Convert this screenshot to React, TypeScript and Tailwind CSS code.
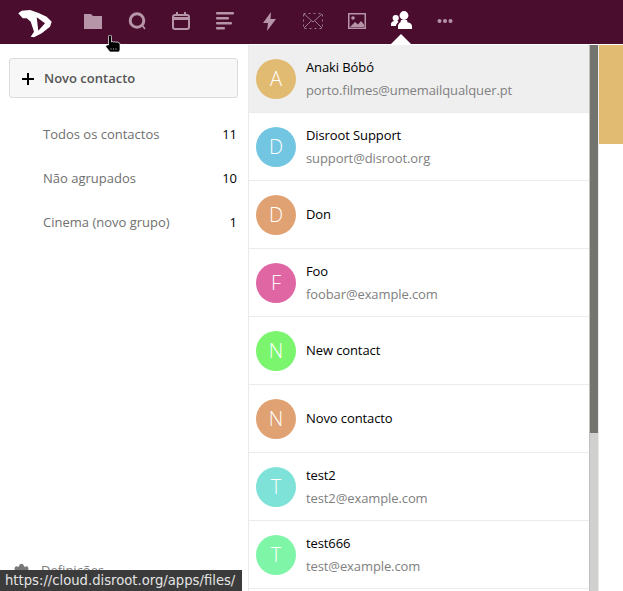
import React from "react";
import { Settings } from "lucide-react";

const contacts = [
  { name: "Anaki Bóbó", email: "porto.filmes@umemailqualquer.pt", letter: "A", color: "bg-[#e2bb73]", active: true },
  { name: "Disroot Support", email: "support@disroot.org", letter: "D", color: "bg-[#73c6e2]" },
  { name: "Don", email: "", letter: "D", color: "bg-[#e0a273]" },
  { name: "Foo", email: "foobar@example.com", letter: "F", color: "bg-[#df66a3]" },
  { name: "New contact", email: "", letter: "N", color: "bg-[#7bf56e]" },
  { name: "Novo contacto", email: "", letter: "N", color: "bg-[#e0a273]" },
  { name: "test2", email: "test2@example.com", letter: "T", color: "bg-[#7fe2d8]" },
  { name: "test666", email: "test@example.com", letter: "T", color: "bg-[#7ff5a8]" },
];

const groups = [
  { label: "Todos os contactos", count: 11 },
  { label: "Não agrupados", count: 10 },
  { label: "Cinema (novo grupo)", count: 1 },
];

const Logo = () => (
  <svg width="34" height="28" viewBox="0 0 34 28" fill="#fff" fillRule="evenodd">
    <path d="M.3 3.300 3.700.7 12 0l8 2.700 8.700 4 5 5-1.700 5-8.300 6.600-7.700 4-3.300-.6 3.300-5-3.300-10-4-3.400h-4zM18.700 7.300l1.600 13.400 6.700-7.400z" />
  </svg>
);

const NavIcon = ({ children }: { children: React.ReactNode }) => (
  <div className="w-[44px] h-11 pb-[2px] flex items-center justify-center">{children}</div>
);

const Header = () => (
  <header className="h-11 shrink-0 bg-[#4a0d2e] flex items-center relative">
    <div className="w-[71px] h-11 pl-[18px] pt-[10px]"><Logo /></div>
    <div className="flex items-center text-[#b795a8]">
      <NavIcon>
        <svg width="18" height="15" viewBox="0 0 18 15" fill="currentColor"><path d="M0 0h7l2 2h9v13H0z" /></svg>
      </NavIcon>
      <NavIcon>
        <svg width="18" height="18" viewBox="0 0 18 18" fill="none" stroke="currentColor" strokeWidth="3"><circle cx="9" cy="8.500" r="6.800" /><path d="M14 13l3 4" strokeWidth="1.500" /></svg>
      </NavIcon>
      <NavIcon>
        <svg width="18" height="18" viewBox="0 0 18 18" fill="none" stroke="currentColor" strokeWidth="2"><rect x="1" y="3" width="16" height="14" rx="2" /><path d="M1 6.500h16" strokeWidth="3" /><path d="M5 0v4M13 0v4" /></svg>
      </NavIcon>
      <NavIcon>
        <svg width="18" height="18" viewBox="0 0 18 18" fill="currentColor"><rect x="0" y="0" width="18" height="2.500" rx="1" /><rect x="0" y="5" width="13" height="2.500" rx="1" /><rect x="0" y="10" width="16" height="2.500" rx="1" /><rect x="0" y="15" width="9" height="2.500" rx="1" /></svg>
      </NavIcon>
      <NavIcon>
        <svg width="13" height="19" viewBox="0 0 13 19" fill="currentColor"><path d="M8 0L0 11h5l-1 8 9-12H7.500z" /></svg>
      </NavIcon>
      <NavIcon>
        <svg width="20" height="16" viewBox="0 0 20 16" fill="none" stroke="#9a7a8c" strokeWidth="1"><rect x="0.500" y="0.500" width="19" height="15" strokeDasharray="2 3" /><path d="M1 1l9 8 9-8M1 15l7-7M19 15l-7-7" /></svg>
      </NavIcon>
      <NavIcon>
        <svg width="18" height="16" viewBox="0 0 18 16">
          <path fill="currentColor" fillRule="evenodd" d="M0 0h18v16H0zM1.500 1.500v13h15v-13z" />
          <path fill="currentColor" d="M2 14l5-5 3 2.500 3-3.500 3 3.500V14z" />
          <circle cx="5" cy="5" r="1.800" fill="currentColor" />
        </svg>
      </NavIcon>
      <div className="w-[44px] h-11 relative flex justify-center text-white pt-[11px]">
        <svg width="21" height="19" viewBox="0 0 21 19" fill="currentColor" className="h-[19px]">
          <circle cx="13" cy="4.500" r="4.400" />
          <path d="M10 9h6l.5 2.200c2.500.6 4.500 1.800 4.500 3.800v3H7v-3c0-1.500 1-3 2.500-3.800z" />
          <circle cx="4.700" cy="7" r="3.100" />
          <path d="M2.800 10h4l.6 1.200c-1.500 1-2.400 2.400-2.400 3.800H0v-2c0-1.200 1.200-2.300 2.800-3z" />
        </svg>
        <div className="absolute bottom-0 left-[12px] w-0 h-0 border-l-[10px] border-r-[10px] border-b-[10px] border-l-transparent border-r-transparent border-b-white" />
      </div>
      <NavIcon>
        <svg width="16" height="6" viewBox="0 0 16 6" fill="currentColor"><circle cx="2.500" cy="3" r="2" /><circle cx="8" cy="3" r="2" /><circle cx="13.500" cy="3" r="2" /></svg>
      </NavIcon>
    </div>
    <svg className="absolute left-[105px] top-[35px] z-10" width="17" height="18" viewBox="0 0 17 18">
      <path d="M3.500 1.500a1.500 1.500 0 0 1 3 0V7l1-.5 1 .5 1.500-.3 1 .6 1.500-.3 2.500 1.500V15L14 17H5L1 12c-.5-1 .2-2.500 2.500-2z" fill="#000" stroke="#fff" strokeWidth=".7" />
      <path d="M6 13v2M8.500 13v2M11 13v2" stroke="#8a8a8a" strokeWidth=".8" />
    </svg>
  </header>
);

const Sidebar = () => (
  <aside className="w-[249px] shrink-0 border-r border-[#ebebeb] relative flex flex-col">
    <div className="pt-[14px] pl-[9px] pr-[10px]">
      <button className="w-[229px] h-[40px] pt-px flex items-center bg-[#f7f7f7] border border-[#dbdbdb] rounded-[3px] pl-[12px] text-[13px] font-semibold text-[#555]">
        <svg width="12" height="12" viewBox="0 0 12 12" className="mr-[10px]"><path d="M0 6h12M6 0v12" stroke="#000" strokeWidth="2" /></svg>
        Novo contacto
      </button>
    </div>
    <ul className="mt-[15px]">
      {groups.map((g) => (
        <li key={g.label} className="h-[44px] flex items-center justify-between pl-[43px] pr-[11px] text-[13px]">
          <span className="text-[#6f6f6f]">{g.label}</span>
          <span className="text-black">{g.count}</span>
        </li>
      ))}
    </ul>
    <div className="mt-auto h-[44px] flex items-center pl-[13px] pt-[4px] text-[13px] text-[#7a7a7a] gap-[11px]">
      <Settings size={17} fill="#777" strokeWidth={2} />
      <span>Definições</span>
    </div>
  </aside>
);

const ContactList = () => (
  <div className="w-[340px] shrink-0 overflow-hidden mt-px">
    {contacts.map((c) => (
      <div key={c.name} className={`h-[68px] flex items-center border-b border-[#ebebeb] pl-[7px] ${c.active ? "bg-[#efefef]" : ""}`}>
        <div className={`w-10 h-10 rounded-full flex items-center justify-center text-white text-[20px] font-light ${c.color}`}>{c.letter}</div>
        <div className="ml-[10px] min-w-0 tracking-[-0.1px]">
          <div className={`text-[13px] text-black leading-[18px] ${c.email ? "" : "mb-[2px]"}`}>{c.name}</div>
          {c.email && <div className="text-[13px] text-[#808080] leading-[18px] mt-[5px]">{c.email}</div>}
        </div>
      </div>
    ))}
  </div>
);

const Scrollbar = () => (
  <div className="w-[9px] shrink-0 mt-px bg-[#d0d0ce] flex flex-col border-l border-[#c0c0c0]">
    <div className="h-[388px] bg-[#73736f]" />
  </div>
);

export default function App() {
  return (
    <div className="w-[623px] h-[591px] overflow-hidden flex flex-col relative bg-white font-['Open_Sans',sans-serif]">
      <Header />
      <div className="flex flex-1 min-h-0">
        <Sidebar />
        <ContactList />
        <Scrollbar />
        <div className="flex-1 mt-px border-l border-[#ebebeb]">
          <div className="h-[99px] bg-[#e2bb73]" />
        </div>
      </div>
      <div className="absolute left-0 bottom-0 h-[21px] w-[242px] bg-[#3b3b3b] text-[#e4e4e4] text-[13.2px] leading-[21px] pl-[5px] font-['DejaVu_Sans',sans-serif] whitespace-nowrap">
        https://cloud.disroot.org/apps/files/
      </div>
    </div>
  );
}
